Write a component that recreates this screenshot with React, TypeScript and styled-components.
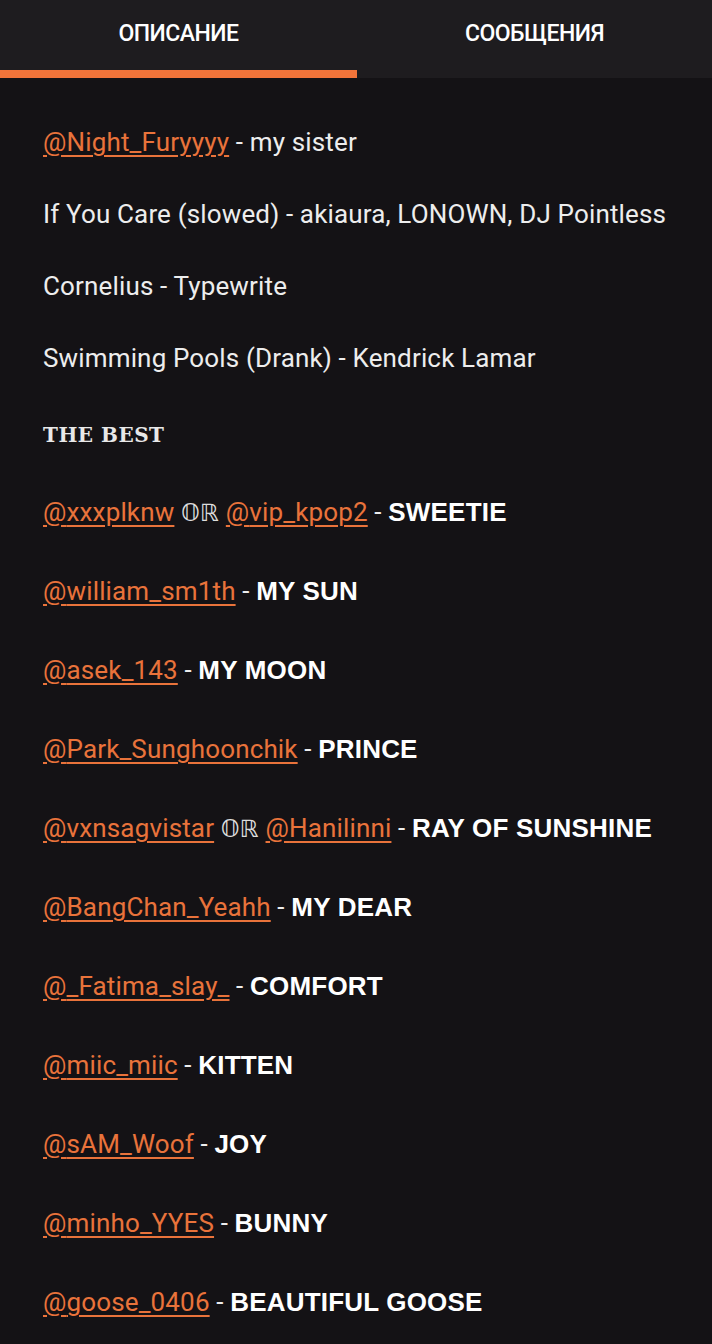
import React from "react";
import styled, { createGlobalStyle } from "styled-components";

const Global = createGlobalStyle`
  html, body { margin: 0; padding: 0; background: #141215; }
  body { font-family: Roboto, "Noto Sans", sans-serif; }
`;

const Page = styled.div`
  width: 712px;
  min-height: 1344px;
  background: #141215;
  color: #ededed;
`;

const TabBar = styled.div`
  display: grid;
  grid-template-columns: 357px 1fr;
  height: 78px;
  background: #1e1c1f;
`;

const Tab = styled.div<{ $active?: boolean }>`
  display: flex;
  justify-content: center;
  padding-top: 19px;
  box-sizing: border-box;
  font-family: Roboto, sans-serif;
  font-weight: 500;
  font-size: 23px;
  letter-spacing: -0.5px;
  color: #ffffff;
  line-height: 30px;
  border-bottom: 8px solid ${(p) => (p.$active ? "#f2743a" : "transparent")};
`;

const Content = styled.div`
  padding: 28px 43px 0;
`;

const Line = styled.p<{ $h: number }>`
  margin: 0;
  height: ${(p) => p.$h}px;
  line-height: ${(p) => p.$h}px;
  font-size: 26px;
  letter-spacing: 0.15px;
  white-space: nowrap;
`;

const Mention = styled.a`
  color: #e9733b;
  text-decoration: underline;
  text-decoration-thickness: 1.5px;
  text-underline-offset: 4px;
`;

const Strong = styled.span`
  font-family: "Liberation Sans", Arial, sans-serif;
  font-weight: 700;
  color: #ffffff;
  font-size: 26px;
  letter-spacing: 0.2px;
`;

const Or = styled.span`
  font-family: "DejaVu Sans", sans-serif;
  color: #dddddd;
  font-size: 24px;
`;

const Heading = styled.span`
  font-family: "DejaVu Serif", "Liberation Serif", serif;
  font-weight: 700;
  font-size: 20px;
  letter-spacing: 0.5px;
  color: #e8e8e8;
`;

type Entry = { users: string[]; label: string };

const entries: Entry[] = [
  { users: ["xxxplknw", "vip_kpop2"], label: "SWEETIE" },
  { users: ["william_sm1th"], label: "MY SUN" },
  { users: ["asek_143"], label: "MY MOON" },
  { users: ["Park_Sunghoonchik"], label: "PRINCE" },
  { users: ["vxnsagvistar", "Hanilinni"], label: "RAY OF SUNSHINE" },
  { users: ["BangChan_Yeahh"], label: "MY DEAR" },
  { users: ["_Fatima_slay_"], label: "COMFORT" },
  { users: ["miic_miic"], label: "KITTEN" },
  { users: ["sAM_Woof"], label: "JOY" },
  { users: ["minho_YYES"], label: "BUNNY" },
  { users: ["goose_0406"], label: "BEAUTIFUL GOOSE" },
];

export default function App() {
  return (
    <Page>
      <Global />
      <TabBar>
        <Tab $active>ОПИСАНИЕ</Tab>
        <Tab>СООБЩЕНИЯ</Tab>
      </TabBar>
      <Content>
        <Line $h={72}>
          <Mention>@Night_Furyyyy</Mention> - my sister
        </Line>
        <Line $h={72}>If You Care (slowed) - akiaura, LONOWN, DJ Pointless</Line>
        <Line $h={72}>Cornelius - Typewrite</Line>
        <Line $h={72}>Swimming Pools (Drank) - Kendrick Lamar</Line>
        <Line $h={79}>
          <Heading>THE BEST</Heading>
        </Line>
        {entries.map((e) => (
          <Line $h={79} key={e.label}>
            {e.users.map((u, i) => (
              <React.Fragment key={u}>
                {i > 0 && (
                  <>
                    {" "}
                    <Or>𝕆ℝ</Or>{" "}
                  </>
                )}
                <Mention>@{u}</Mention>
              </React.Fragment>
            ))}{" "}
            - <Strong>{e.label}</Strong>
          </Line>
        ))}
      </Content>
    </Page>
  );
}
